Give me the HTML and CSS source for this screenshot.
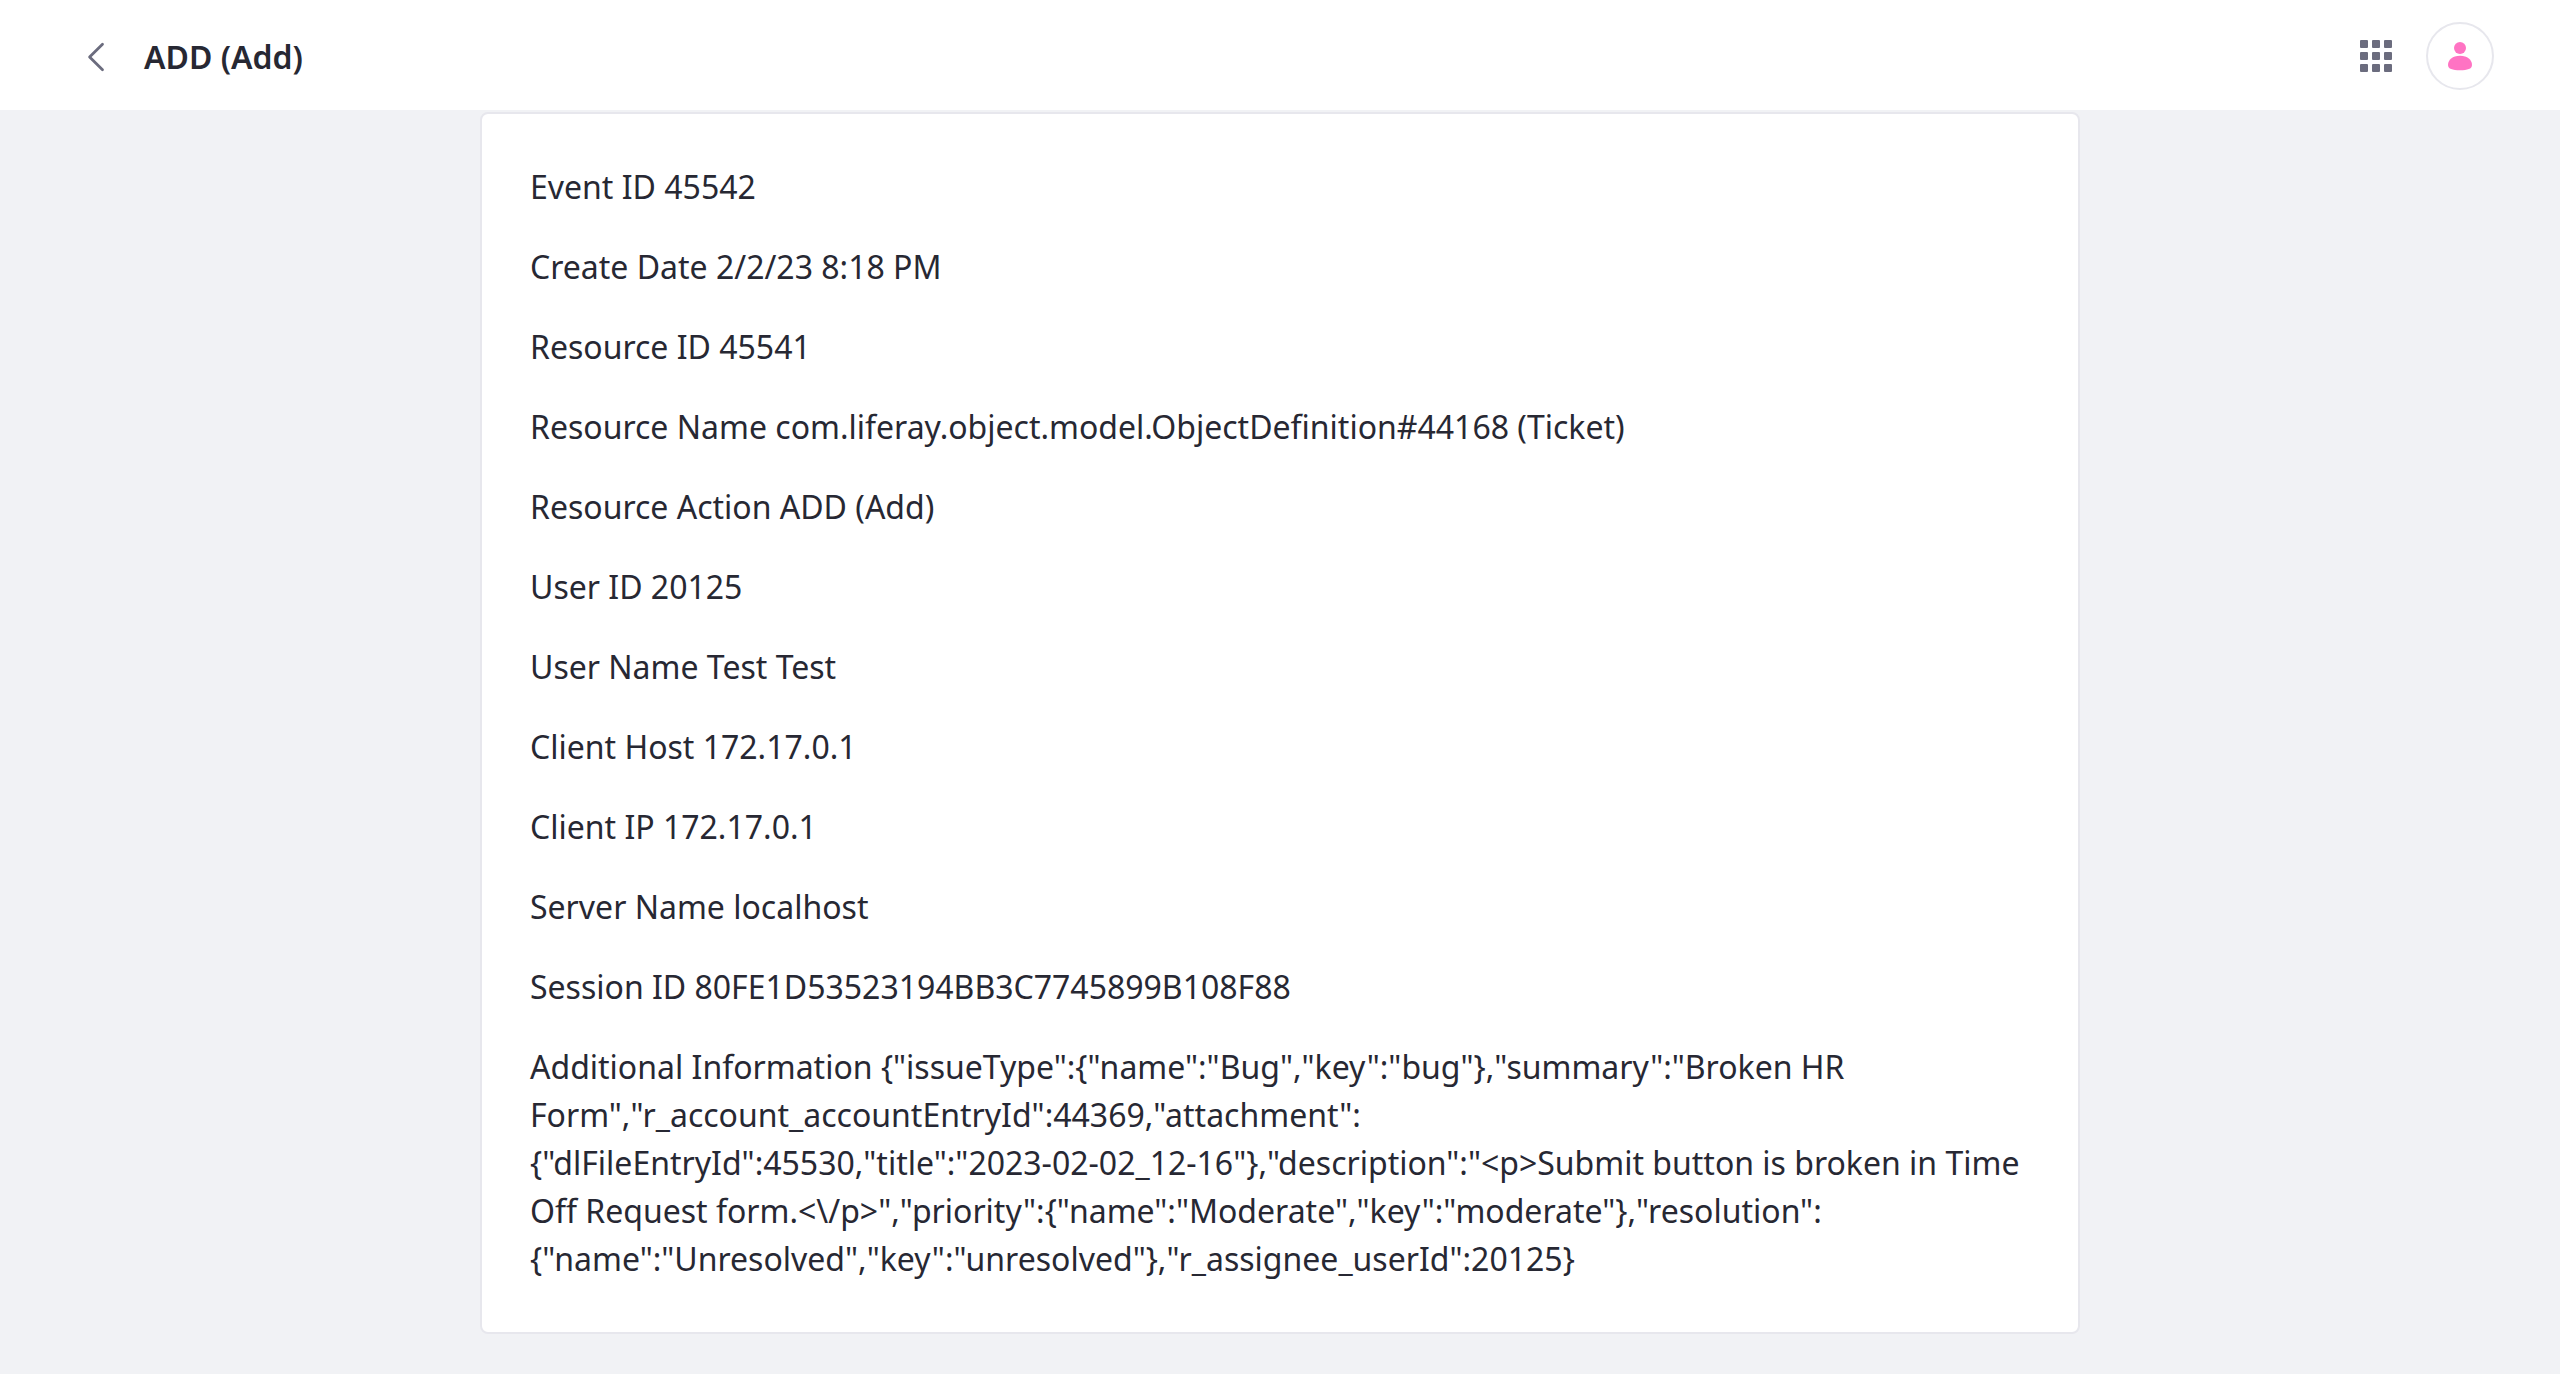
FILE: index.html
```html
<!DOCTYPE html>
<html lang="en">
<head>
<meta charset="utf-8">
<title>ADD (Add)</title>
<link rel="stylesheet" href="styles.css">
</head>
<body>
<header class="topbar">
  <svg class="back" viewBox="0 0 32 32"><path d="M22.5 4.2 9.6 17l12.9 12.8" fill="none" stroke="#6b6c7e" stroke-width="2.8" stroke-linecap="round" stroke-linejoin="round"/></svg>
  <h1 class="title">ADD (Add)</h1>
  <svg class="apps" viewBox="0 0 32 32" fill="#6b6c7e">
    <rect width="8" height="8" rx="1"/><rect x="12" width="8" height="8" rx="1"/><rect x="24" width="8" height="8" rx="1"/>
    <rect y="12" width="8" height="8" rx="1"/><rect x="12" y="12" width="8" height="8" rx="1"/><rect x="24" y="12" width="8" height="8" rx="1"/>
    <rect y="24" width="8" height="8" rx="1"/><rect x="12" y="24" width="8" height="8" rx="1"/><rect x="24" y="24" width="8" height="8" rx="1"/>
  </svg>
  <span class="avatar"><svg class="user" viewBox="0 0 32 32" fill="#ff73c3"><circle cx="16" cy="8" r="6"/><path d="M16 15.8C8.5 15.8 4 20 4 25c0 4 4.500 5.200 12 5.200S28 29 28 25c0-5-4.500-9.200-12-9.200z"/></svg></span>
</header>
<main class="sheet">
  <p>Event ID 45542</p>
  <p>Create Date 2/2/23 8:18 PM</p>
  <p>Resource ID 45541</p>
  <p>Resource Name com.liferay.object.model.ObjectDefinition#44168 (Ticket)</p>
  <p>Resource Action ADD (Add)</p>
  <p>User ID 20125</p>
  <p>User Name Test Test</p>
  <p>Client Host 172.17.0.1</p>
  <p>Client IP 172.17.0.1</p>
  <p>Server Name localhost</p>
  <p>Session ID 80FE1D53523194BB3C7745899B108F88</p>
  <p>Additional Information {"issueType":{"name":"Bug","key":"bug"},"summary":"Broken HR<br>Form","r_account_accountEntryId":44369,"attachment":<br>{"dlFileEntryId":45530,"title":"2023-02-02_12-16"},"description":"&lt;p&gt;Submit button is broken in Time<br>Off Request form.&lt;\/p&gt;","priority":{"name":"Moderate","key":"moderate"},"resolution":<br>{"name":"Unresolved","key":"unresolved"},"r_assignee_userId":20125}</p>
</main>
</body>
</html>
```
FILE: styles.css
```css
* { box-sizing: border-box; }
body { margin: 0; min-height: 1374px; background: #f1f2f5; color: #272833; font: 32px/48px "Noto Sans", sans-serif; }
.topbar { display: flex; align-items: center; height: 110px; margin-bottom: 2px; padding: 2px 66px 0 80px; background: #fff; }
.back { width: 32px; height: 32px; margin-right: 32px; }
.title { margin: 0; padding-top: 2px; font-size: 32px; font-weight: 600; }
.apps { width: 32px; height: 32px; margin: 0 34px 0 auto; }
.avatar { display: flex; align-items: center; justify-content: center; width: 68px; height: 68px; border: 2px solid #e7e7ed; border-radius: 50%; }
.user { width: 32px; height: 32px; }
.sheet { width: 1600px; height: 1222px; margin: 0 auto; padding: 49px 48px 0; background: #fff; border: 2px solid #e7e7ed; border-radius: 8px; }
.sheet p { margin: 0 0 32px; white-space: nowrap; }
```
